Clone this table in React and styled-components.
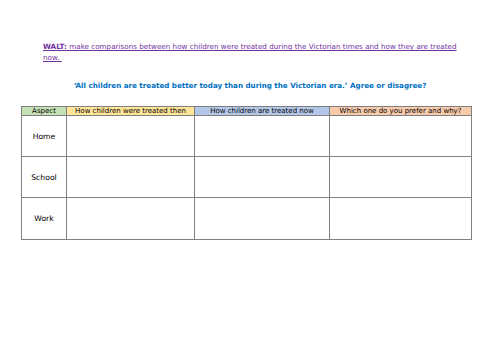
import React from "react"
import styled, { createGlobalStyle } from "styled-components"

const Global = createGlobalStyle`
  body {
    margin: 0;
    background: #ffffff;
    font-family: "DejaVu Sans", Verdana, sans-serif;
  }
`

const Page = styled.div`
  width: 500px;
  height: 353px;
  padding-top: 41px;
  box-sizing: border-box;
`

const Walt = styled.p`
  margin: 0 0 0 43px;
  width: 425px;
  font-size: 7.2px;
  line-height: 11px;
  color: #7030a0;
  text-decoration: underline;
  b {
    font-weight: bold;
  }
`

const Question = styled.p`
  margin: 17px 0 0 0;
  text-align: center;
  font-size: 7.15px;
  line-height: 11px;
  font-weight: bold;
  color: #0070c0;
`

const Grid = styled.div`
  margin: 15px 0 0 21px;
  display: grid;
  grid-template-columns: 44px 127px 134px 141px;
  grid-template-rows: 8px 40px 40px 41px;
  gap: 1px;
  padding: 1px;
  background: #808080;
  width: max-content;
`

const Head = styled.div`
  background: ${p => p.$bg};
  font-size: 7px;
  line-height: 8px;
  text-align: center;
  color: #000;
  white-space: nowrap;
  overflow: hidden;
`

const Cell = styled.div`
  background: #fff;
  font-size: 7.7px;
  display: flex;
  align-items: center;
  justify-content: center;
  color: #000;
`

const headers = [
  ["Aspect", "#c5e0b3"],
  ["How children were treated then", "#ffe599"],
  ["How children are treated now", "#b4c6e7"],
  ["Which one do you prefer and why?", "#f7caac"],
]

const aspects = ["Home", "School", "Work"]

export default function App() {
  return (
    <Page>
      <Global />
      <Walt>
        <b>WALT:</b> make comparisons between how children were treated during the Victorian times and how they are treated now.&nbsp;
      </Walt>
      <Question>
        ‘All children are treated better today than during the Victorian era.’ Agree or disagree?
      </Question>
      <Grid>
        {headers.map(([t, c]) => (
          <Head key={t} $bg={c}>{t}</Head>
        ))}
        {aspects.map(a => (
          <React.Fragment key={a}>
            <Cell>{a}</Cell>
            <Cell />
            <Cell />
            <Cell />
          </React.Fragment>
        ))}
      </Grid>
    </Page>
  )
}
